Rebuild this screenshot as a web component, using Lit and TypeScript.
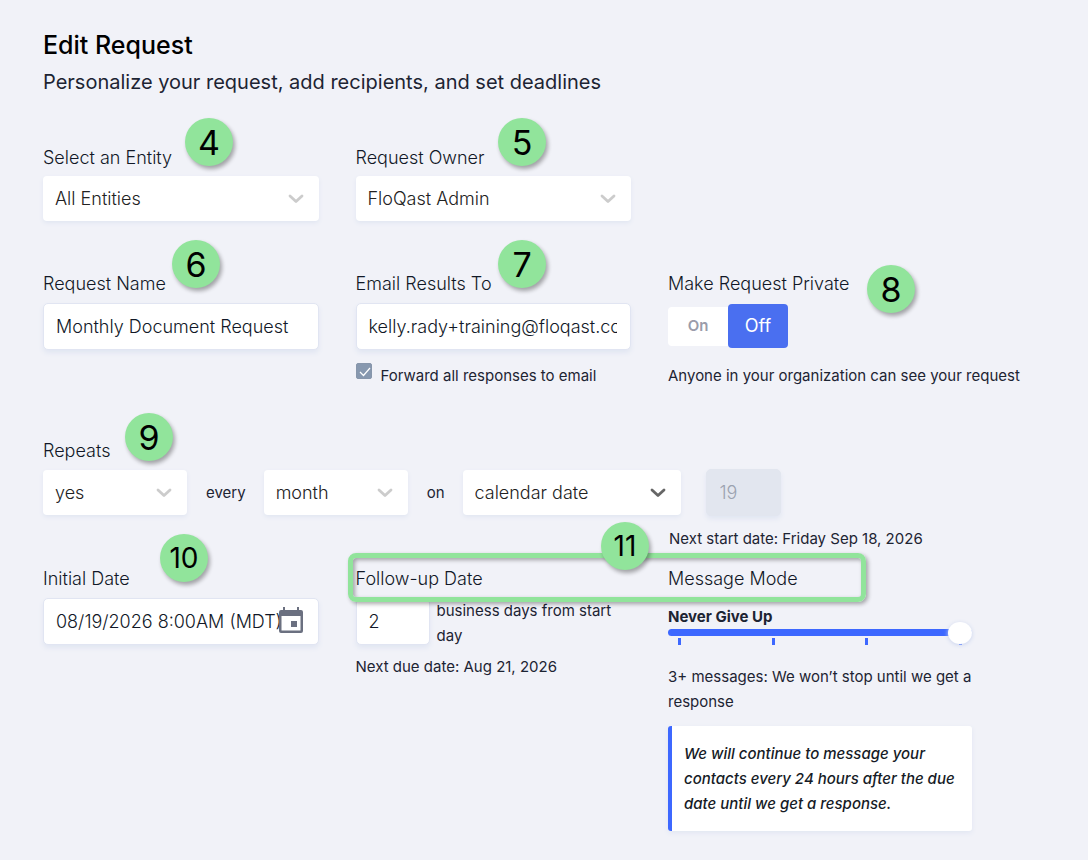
import { LitElement, html, css } from "lit";
import { customElement, property } from "lit/decorators.js";

interface Marker {
  n: number;
  x: number;
  y: number;
}

const MARKERS: Marker[] = [
  { n: 4, x: 185, y: 118 },
  { n: 5, x: 498, y: 118 },
  { n: 6, x: 172, y: 240 },
  { n: 7, x: 498, y: 240 },
  { n: 8, x: 867, y: 265 },
  { n: 9, x: 125, y: 413 },
  { n: 10, x: 160, y: 534 },
  { n: 11, x: 601, y: 522 },
];

@customElement("select-box")
class SelectBox extends LitElement {
  @property() value = "";
  @property() label = "";
  @property({ type: Boolean }) dark = false;

  static styles = css`
    :host {
      display: grid;
      align-items: center;
      min-width: 0;
    }
    .select,
    .chevron {
      grid-area: 1 / 1;
    }
    .select {
      appearance: none;
      width: 100%;
      height: 45px;
      padding: 0 44px 0 12px;
      border: 0;
      border-radius: 4px;
      background: #fff;
      box-shadow: 0 2px 4px #e1e6f2;
      color: #222;
      font: 300 18px/24px Inter, sans-serif;
    }
    .chevron {
      justify-self: end;
      width: 16px;
      height: 10px;
      margin-right: 15px;
      color: #ccc;
      pointer-events: none;
    }
    .chevron.dark {
      color: #666;
    }
  `;

  render() {
    return html`
      <select class="select" aria-label=${this.label}>
        <option>${this.value}</option>
      </select>
      <svg class="chevron ${this.dark ? "dark" : ""}" viewBox="0 0 16 10" aria-hidden="true">
        <path d="M2 2l6 5.6L14 2" fill="none" stroke="currentColor" stroke-width="2.8" stroke-linecap="round" stroke-linejoin="round" />
      </svg>
    `;
  }
}

@customElement("app-root")
class AppRoot extends LitElement {
  static styles = css`
    :host {
      display: block;
      min-height: 100vh;
      background: #f1f2f8;
      color: #1d2433;
      font: 400 15px/25px Inter, sans-serif;
    }
    * {
      box-sizing: border-box;
    }
    .page {
      position: relative;
      padding: 29px 116px 29px 43px;
    }
    .title {
      margin: 0;
      color: #000;
      font-size: 25px;
      font-weight: 500;
      line-height: 32px;
    }
    .subtitle {
      margin: 6px 0 0;
      font-size: 20px;
      line-height: 30px;
    }
    .grid {
      display: grid;
      grid-template-columns: minmax(0, 1fr) minmax(0, 1fr) 304px;
      column-gap: 37px;
    }
    .people {
      margin-top: 49px;
    }
    .details {
      margin-top: 51px;
    }
    .label {
      display: block;
      margin-bottom: 6px;
      color: #111827;
      font-size: 18px;
      font-weight: 300;
      line-height: 24px;
    }
    .details .label,
    .schedule .label {
      margin-bottom: 7px;
    }
    .input {
      display: block;
      width: 100%;
      height: 47px;
      padding: 0 13px 0 12px;
      border: 1px solid #e1e5f2;
      border-radius: 5px;
      background: #fff;
      box-shadow: 0 3px 5px #e1e6f2;
      color: #111827;
      font: 300 18px/24px Inter, sans-serif;
    }
    .check {
      display: flex;
      align-items: start;
      gap: 9px;
      margin-top: 13px;
      line-height: 25px;
    }
    .checkbox {
      appearance: none;
      width: 16px;
      height: 16px;
      margin: 0;
      border-radius: 2px;
      border: 1px solid #8796ab;
      background: #8798af
        url("data:image/svg+xml,%3Csvg xmlns='http://www.w3.org/2000/svg' viewBox='0 0 14 14'%3E%3Cpath d='M3 8l3.500 3.500L13 4' fill='none' stroke='%23fff' stroke-width='1.2'/%3E%3C/svg%3E");
    }
    .toggle {
      display: flex;
      align-items: center;
      width: 120px;
      height: 44px;
      margin-top: 8px;
    }
    .toggle-button {
      flex: 1;
      height: 39px;
      padding: 0;
      border: 0;
      border-radius: 4px 0 0 4px;
      background: #fff;
      color: #9a9caa;
      font: 600 15px/24px Inter, sans-serif;
    }
    .toggle-button.active {
      height: 44px;
      border-radius: 4px;
      background: #4a6ff0;
      color: #fff;
      font-size: 18px;
      font-weight: 400;
    }
    .hint {
      margin: 0;
    }
    .privacy-hint {
      margin-top: 15px;
      white-space: nowrap;
    }
    .repeats {
      margin-top: 51px;
    }
    .repeat-row {
      display: flex;
      align-items: center;
    }
    .word {
      padding: 0 18px 0 19px;
    }
    .short {
      width: 144px;
    }
    .wide {
      width: 218px;
    }
    .day {
      width: 75px;
      margin-left: 25px;
      padding: 0 13px;
      border-color: #e2e6ef;
      background: #e2e6ef;
      color: #9ba2b0;
    }
    .start-date {
      padding-left: 1px;
      grid-column: 3;
    }
    .start {
      margin-top: 10px;
    }
    .schedule {
      margin-top: 16px;
    }
    .date-field {
      display: grid;
      align-items: center;
    }
    .date-field > * {
      grid-area: 1 / 1;
    }
    .calendar {
      justify-self: end;
      width: 24px;
      height: 26px;
      margin: 0 16px 4px 0;
      color: #6b7080;
    }
    .follow {
      display: flex;
      gap: 7px;
    }
    .days {
      flex: none;
      width: 74px;
    }
    .due {
      margin-top: 6px;
    }
    .mode {
      display: block;
      margin-top: 14px;
      font-weight: 700;
      line-height: 24px;
    }
    .slider {
      appearance: none;
      display: block;
      position: relative;
      width: 100%;
      height: 7px;
      margin: 0;
      border-radius: 4px;
      background: #3d68ff;
    }
    .slider::-webkit-slider-thumb {
      appearance: none;
      width: 24px;
      height: 22px;
      border-radius: 50%;
      background: #fff;
      box-shadow: 0 1px 4px #c9d3ee;
    }
    .ticks {
      display: flex;
      justify-content: space-between;
      margin-top: 2px;
      padding: 0 10px;
    }
    .tick {
      width: 3px;
      height: 7px;
      background: #3d68ff;
    }
    .messages {
      margin-top: 19px;
    }
    .note {
      margin: 12px 0 0;
      padding: 15px 12px;
      border-left: 4px solid #3d68ff;
      border-radius: 3px;
      background: #fff;
      box-shadow: 0 2px 5px #e1e6f2;
      color: #161b26;
      font-style: italic;
      font-weight: 500;
    }
    .marker {
      position: absolute;
      width: 48px;
      height: 48px;
      border-radius: 50%;
      background: #91e49b;
      box-shadow: 2px 3px 4px #0005;
      color: #000;
      font-size: 34px;
      line-height: 49px;
      text-align: center;
    }
    .marker.small {
      font-size: 28px;
    }
    .highlight {
      position: absolute;
      top: 553px;
      left: 348px;
      width: 518px;
      height: 49px;
      border: 5px solid #91e49b;
      border-radius: 8px;
      box-shadow: 2px 2px 4px #0005, inset 2px 2px 4px #0005;
      pointer-events: none;
    }
  `;

  render() {
    return html`
      <main class="page">
        <h1 class="title">Edit Request</h1>
        <p class="subtitle">Personalize your request, add recipients, and set deadlines</p>

        <section class="grid people">
          <div>
            <span class="label">Select an Entity</span>
            <select-box label="Select an Entity" value="All Entities"></select-box>
          </div>
          <div>
            <span class="label">Request Owner</span>
            <select-box label="Request Owner" value="FloQast Admin"></select-box>
          </div>
        </section>

        <section class="grid details">
          <div>
            <label class="label" for="name">Request Name</label>
            <input class="input" id="name" type="text" value="Monthly Document Request" />
          </div>
          <div>
            <label class="label" for="email">Email Results To</label>
            <input class="input" id="email" type="text" value="kelly.rady+training@floqast.com" />
            <label class="check">
              <input class="checkbox" type="checkbox" checked />
              <span>Forward all responses to email</span>
            </label>
          </div>
          <div>
            <span class="label" id="private">Make Request Private</span>
            <div class="toggle" role="group" aria-labelledby="private">
              <button class="toggle-button" type="button">On</button>
              <button class="toggle-button active" type="button" aria-pressed="true">Off</button>
            </div>
            <p class="hint privacy-hint">Anyone in your organization can see your request</p>
          </div>
        </section>

        <section class="repeats">
          <span class="label">Repeats</span>
          <div class="repeat-row">
            <select-box class="short" label="Repeats" value="yes"></select-box>
            <span class="word">every</span>
            <select-box class="short" label="Interval" value="month"></select-box>
            <span class="word">on</span>
            <select-box class="wide" label="Day type" value="calendar date" dark></select-box>
            <input class="input day" type="text" value="19" aria-label="Day of month" disabled />
          </div>
        </section>

        <div class="grid start">
          <p class="hint start-date">Next start date: Friday Sep 18, 2026</p>
        </div>

        <section class="grid schedule">
          <div>
            <label class="label" for="date">Initial Date</label>
            <div class="date-field">
              <input class="input" id="date" type="text" value="08/19/2026 8:00AM (MDT)" />
              <svg class="calendar" viewBox="0 0 24 26" aria-hidden="true">
                <path
                  fill="currentColor"
                  fill-rule="evenodd"
                  d="M4 0h2v3h12V0h2v3h2a2 2 0 0 1 2 2v19a2 2 0 0 1-2 2H2a2 2 0 0 1-2-2V5a2 2 0 0 1 2-2h2zM2.500 9v14.500h19V9zM12 14h6v6h-6z"
                />
              </svg>
            </div>
          </div>
          <div>
            <label class="label" for="days">Follow-up Date</label>
            <div class="follow">
              <input class="input days" id="days" type="text" value="2" />
              <span>business days from start day</span>
            </div>
            <p class="hint due">Next due date: Aug 21, 2026</p>
          </div>
          <div>
            <label class="label" for="mode">Message Mode</label>
            <strong class="mode">Never Give Up</strong>
            <input class="slider" id="mode" type="range" min="0" max="3" value="3" />
            <div class="ticks">
              <i class="tick"></i><i class="tick"></i><i class="tick"></i><i class="tick"></i>
            </div>
            <p class="hint messages">3+ messages: We won’t stop until we get a response</p>
            <p class="note">
              We will continue to message your contacts every 24 hours after the due date until we
              get a response.
            </p>
          </div>
        </section>

        <div class="highlight"></div>
        ${MARKERS.map(
          (m) => html`<span
            class="marker ${m.n > 9 ? "small" : ""}"
            style="left:${m.x}px;top:${m.y}px"
            >${m.n}</span
          >`
        )}
      </main>
    `;
  }
}
